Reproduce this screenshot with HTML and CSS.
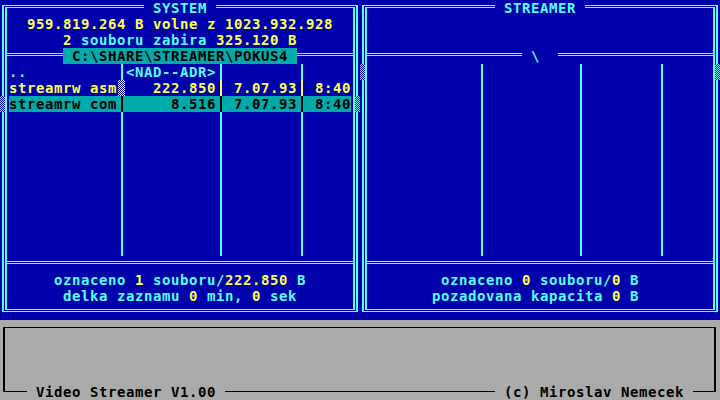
FILE: index.html
```html
<!DOCTYPE html>
<html lang="cs">
<head>
<meta charset="utf-8">
<title>Video Streamer V1.00</title>
<link rel="stylesheet" href="styles.css">
</head>
<body>
<div class="screen">
  <div class="panels">
    <section class="panel">
      <div class="frame">
        <h2 class="title"><span>SYSTEM</span></h2>
        <div class="frame-inner">
          <div class="info">
            <p class="line"><b>959.819.264 B volne z 1023.932.928</b></p>
            <p class="line"><b>2</b> souboru zabira <b>325.120 B</b></p>
          </div>
          <div class="rule">
            <span class="rule-line"></span>
            <span class="path active">C:\SHARE\STREAMER\POKUS4</span>
            <span class="rule-line"></span>
          </div>
          <div class="list">
            <div class="row">
              <span class="name">..</span><i class="sep"></i><span class="size">&lt;NAD--ADR&gt;</span><i class="sep"></i><span class="date"></span><i class="sep"></i><span class="time"></span>
            </div>
            <div class="row marked">
              <span class="name">streamrw asm</span><i class="tag"></i><span class="size">222.850</span><i class="sep"></i><span class="date">7.07.93</span><i class="sep"></i><span class="time">8:40</span>
            </div>
            <div class="row cursor current">
              <span class="name">streamrw com</span><i class="sep"></i><span class="size">8.516</span><i class="sep"></i><span class="date">7.07.93</span><i class="sep"></i><span class="time">8:40</span>
            </div>
            <div class="row fill">
              <span class="name"></span><i class="sep"></i><span class="size"></span><i class="sep"></i><span class="date"></span><i class="sep"></i><span class="time"></span>
            </div>
          </div>
          <div class="rule">
            <span class="rule-line"></span>
          </div>
          <div class="summary">
            <p class="line">oznaceno <b>1</b> souboru/<b>222.850</b> B</p>
            <p class="line">delka zaznamu <b>0</b> min, <b>0</b> sek</p>
          </div>
        </div>
      </div>
    </section>

    <section class="panel">
      <div class="frame">
        <h2 class="title"><span>STREAMER</span></h2>
        <div class="frame-inner">
          <div class="info">
            <p class="line"></p>
            <p class="line"></p>
          </div>
          <div class="rule">
            <span class="rule-line"></span>
            <span class="path shift">\</span>
            <span class="rule-line"></span>
          </div>
          <div class="list">
            <div class="row cursor">
              <span class="name"></span><i class="sep"></i><span class="size"></span><i class="sep"></i><span class="date"></span><i class="sep"></i><span class="time"></span>
            </div>
            <div class="row fill">
              <span class="name"></span><i class="sep"></i><span class="size"></span><i class="sep"></i><span class="date"></span><i class="sep"></i><span class="time"></span>
            </div>
          </div>
          <div class="rule">
            <span class="rule-line"></span>
          </div>
          <div class="summary">
            <p class="line">oznaceno <b>0</b> souboru/<b>0</b> B</p>
            <p class="line shift">pozadovana kapacita <b>0</b> B</p>
          </div>
        </div>
      </div>
    </section>
  </div>

  <footer class="status">
    <div class="status-box">
      <div class="status-foot">
        <span>Video Streamer V1.00</span>
        <span>(c) Miroslav Nemecek</span>
      </div>
    </div>
  </footer>
</div>
</body>
</html>
```

FILE: styles.css
```css
* {
  box-sizing: border-box;
}

html,
body {
  margin: 0;
  padding: 0;
}

body {
  width: 720px;
  height: 400px;
  overflow: hidden;
  background: #0000aa;
  color: #55ffff;
  font-family: "DejaVu Sans Mono", monospace;
  font-size: 14px;
  font-weight: bold;
  line-height: 16px;
  letter-spacing: 0.5713px;
}

.screen {
  width: 720px;
  height: 400px;
  display: flex;
  flex-direction: column;
}

/* ---------- panels ---------- */

.panels {
  display: flex;
  height: 320px;
  background: #0000aa;
}

.panel {
  width: 360px;
  padding: 5px 2px 8px;
  display: flex;
}

.frame {
  position: relative;
  flex: 1;
  display: flex;
  border: solid #55ffff;
  border-width: 1px 2px;
  padding: 1px;
}

.frame-inner {
  flex: 1;
  display: flex;
  flex-direction: column;
  border: solid #55ffff;
  border-width: 1px 2px;
  padding-top: 8px;
}

.title {
  position: absolute;
  top: -6px;
  left: 0;
  right: 0;
  margin: 0;
  display: flex;
  justify-content: center;
  font: inherit;
}

.title span {
  height: 16px;
  padding: 0 9px;
  background: #0000aa;
}

.info,
.summary {
  height: 32px;
}

.line {
  margin: 0;
  height: 16px;
  padding: 0 2px;
  text-align: center;
  white-space: pre;
}

.line.shift {
  padding-right: 11px;
}

.line b {
  color: #ffff55;
  font-weight: inherit;
}

/* horizontal double rules */

.rule {
  display: flex;
  height: 16px;
}

.rule-line {
  flex: 1;
  height: 3px;
  margin-top: 5px;
  border-top: 1px solid #55ffff;
  border-bottom: 1px solid #55ffff;
}

.path {
  height: 16px;
  padding: 0 9px;
  white-space: pre;
}

.path.active {
  background: #00aaaa;
  color: #000;
}

.path.shift {
  margin-right: 9px;
}

/* ---------- file list ---------- */

.list {
  height: 192px;
  display: flex;
  flex-direction: column;
}

.row {
  position: relative;
  display: grid;
  grid-template-columns: 108px 9px 90px 9px 72px 9px 45px;
  height: 16px;
  margin: 0 2px;
  white-space: pre;
}

.row.fill {
  flex: 1;
  height: auto;
}

.size,
.date,
.time {
  text-align: right;
}

.sep,
.tag {
  font-style: normal;
}

.sep {
  margin-left: 4px;
  border-left: 2px solid currentColor;
}

.tag {
  width: 7px;
  margin-left: 1px;
  background: repeating-conic-gradient(#ffff55 0 25%, #0000aa 0 50%) 0 0 / 2px 2px;
}

.marked {
  color: #ffff55;
}

.current {
  background: #00aaaa;
  color: #000;
}

/* cursor markers drawn over the frame edges */

.cursor::before,
.cursor::after {
  content: "";
  position: absolute;
  top: 0;
  bottom: 0;
  width: 9px;
}

.cursor::before {
  left: -9px;
  background:
    linear-gradient(90deg, transparent 5px, #55ffff 5px 7px, #0000aa 7px),
    repeating-conic-gradient(#55ffff 0 25%, #0000aa 0 50%) 0 0 / 2px 2px;
}

.cursor::after {
  right: -9px;
  background:
    linear-gradient(90deg, #0000aa 2px, #55ffff 2px 4px, transparent 4px),
    repeating-conic-gradient(#55ffff 0 25%, #0000aa 0 50%) 0 0 / 2px 2px;
}

/* ---------- status area ---------- */

.status {
  height: 80px;
  padding: 7px 4px 8px 3px;
  background: #aaaaaa;
  color: #000;
}

.status-box {
  position: relative;
  height: 65px;
  border: solid #000;
  border-width: 1px 2px;
}

.status-foot {
  position: absolute;
  left: 22px;
  right: 21px;
  bottom: -9px;
  height: 16px;
  display: flex;
  justify-content: space-between;
}

.status-foot span {
  padding: 0 9px;
  background: #aaaaaa;
  white-space: pre;
}
```
